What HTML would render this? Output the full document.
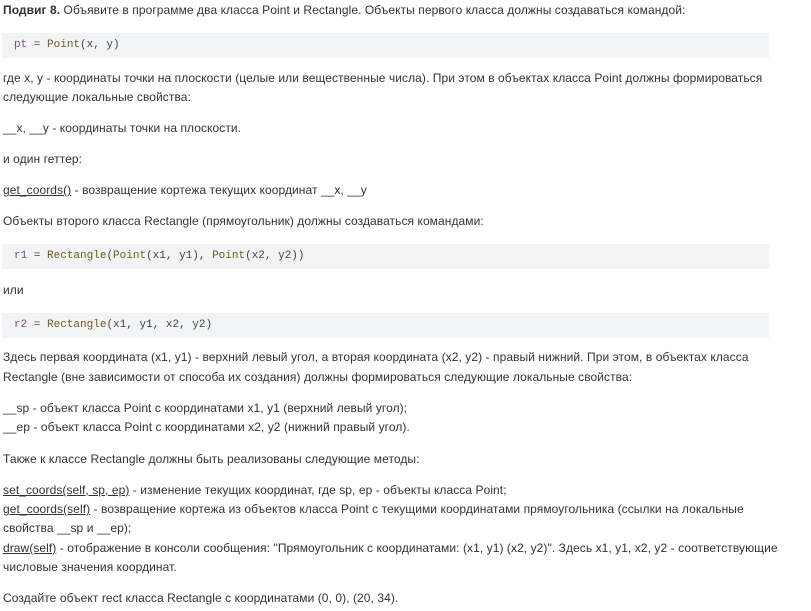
<!DOCTYPE html>
<html><head><meta charset="utf-8"><style>
body{margin:0;background:#fff;width:811px;height:611px;overflow:hidden;position:relative;font-family:"Liberation Sans",sans-serif;font-size:12px;color:#333;letter-spacing:0.07px;}
.l{position:absolute;left:3px;white-space:nowrap;line-height:19px;}
.c{position:absolute;left:2px;width:767px;height:25px;background:#f2f3f5;font-family:"Liberation Mono",monospace;font-size:11px;line-height:25px;padding-left:12px;box-sizing:border-box;color:#444;letter-spacing:0;}
.v{color:#7a4a8c}.f{color:#6e5a20}
u{text-decoration:underline}
</style></head><body>
<div class="l" style="top:1px"><b>Подвиг 8.</b> Объявите в программе два класса Point и Rectangle. Объекты первого класса должны создаваться командой:</div>
<div class="c" style="top:33px"><span class="v">pt</span> = <span class="f">Point</span>(x, y)</div>
<div class="l" style="top:69px">где x, y - координаты точки на плоскости (целые или вещественные числа). При этом в объектах класса Point должны формироваться</div>
<div class="l" style="top:88px">следующие локальные свойства:</div>
<div class="l" style="top:119px">__x, __y - координаты точки на плоскости.</div>
<div class="l" style="top:150px">и один геттер:</div>
<div class="l" style="top:181px"><u>get_coords()</u> - возвращение кортежа текущих координат __x, __y</div>
<div class="l" style="top:212px">Объекты второго класса Rectangle (прямоугольник) должны создаваться командами:</div>
<div class="c" style="top:244px"><span class="v">r1</span> = <span class="f">Rectangle</span>(<span class="f">Point</span>(x1, y1), <span class="f">Point</span>(x2, y2))</div>
<div class="l" style="top:281px">или</div>
<div class="c" style="top:313px"><span class="v">r2</span> = <span class="f">Rectangle</span>(x1, y1, x2, y2)</div>
<div class="l" style="top:348px">Здесь первая координата (x1, y1) - верхний левый угол, а вторая координата (x2, y2) - правый нижний. При этом, в объектах класса</div>
<div class="l" style="top:368px">Rectangle (вне зависимости от способа их создания) должны формироваться следующие локальные свойства:</div>
<div class="l" style="top:399px">__sp - объект класса Point с координатами x1, y1 (верхний левый угол);</div>
<div class="l" style="top:418px">__ep - объект класса Point с координатами x2, y2 (нижний правый угол).</div>
<div class="l" style="top:450px">Также к классе Rectangle должны быть реализованы следующие методы:</div>
<div class="l" style="top:481px"><u>set_coords(self, sp, ep)</u> - изменение текущих координат, где sp, ep - объекты класса Point;</div>
<div class="l" style="top:500px"><u>get_coords(self)</u> - возвращение кортежа из объектов класса Point с текущими координатами прямоугольника (ссылки на локальные</div>
<div class="l" style="top:519px">свойства __sp и __ep);</div>
<div class="l" style="top:539px"><u>draw(self)</u> - отображение в консоли сообщения: "Прямоугольник с координатами: (x1, y1) (x2, y2)". Здесь x1, y1, x2, y2 - соответствующие</div>
<div class="l" style="top:558px">числовые значения координат.</div>
<div class="l" style="top:589px">Создайте объект rect класса Rectangle с координатами (0, 0), (20, 34).</div>
</body></html>
